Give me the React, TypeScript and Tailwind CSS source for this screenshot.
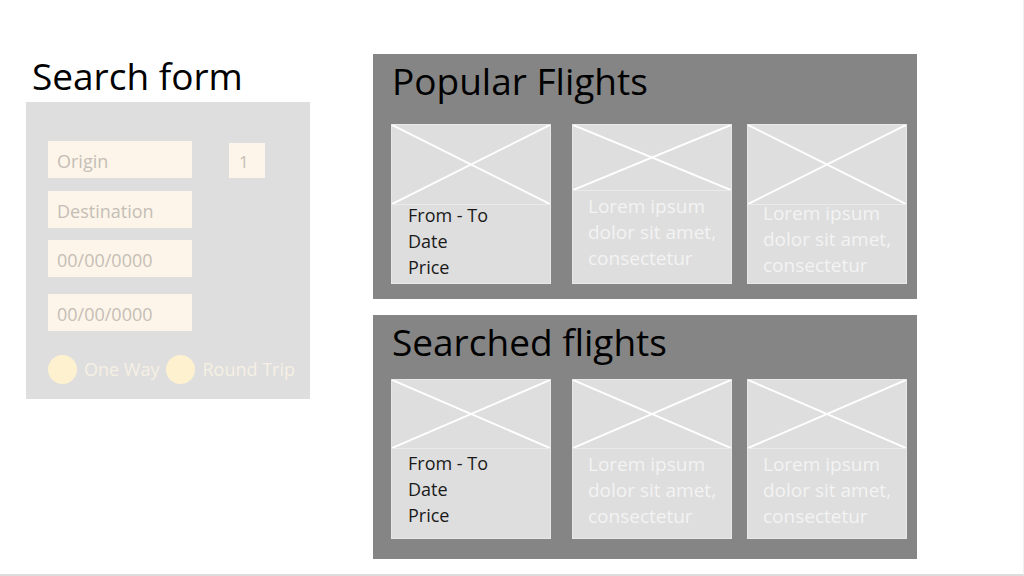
import React from "react";

const font = { fontFamily: '"Open Sans", "Noto Sans", sans-serif' };

function Placeholder({ h }: { h: string }) {
  return (
    <div className={`relative w-full ${h} border-b border-[#eaeaea]`}>
      <svg className="absolute inset-0 h-full w-full" viewBox="0 0 100 100" preserveAspectRatio="none">
        <line x1="0" y1="0" x2="100" y2="100" stroke="#ffffff" strokeWidth="2" vectorEffect="non-scaling-stroke" />
        <line x1="100" y1="0" x2="0" y2="100" stroke="#ffffff" strokeWidth="2" vectorEffect="non-scaling-stroke" />
      </svg>
    </div>
  );
}

function InfoCard({ img, pad }: { img: string; pad: string }) {
  return (
    <div className="flex h-[160px] w-[160px] flex-col overflow-hidden border border-[#e8e8e8] bg-[#dedede]">
      <Placeholder h={img} />
      <div className={`pl-[16px] text-[18px] leading-[26px] text-[#1a1a1a] ${pad}`}>
        <div>From - To</div>
        <div>Date</div>
        <div>Price</div>
      </div>
    </div>
  );
}

function LoremCard({ img, pad }: { img: string; pad: string }) {
  return (
    <div className="flex h-[160px] w-[160px] flex-col overflow-hidden border border-[#e8e8e8] bg-[#dedede]">
      <Placeholder h={img} />
      <div className={`whitespace-nowrap pl-[15px] text-[19px] leading-[26px] text-[#f3f3f3] ${pad}`}>
        <div>Lorem ipsum</div>
        <div>dolor sit amet,</div>
        <div>consectetur</div>
      </div>
    </div>
  );
}

function Field({ label, mt }: { label: string; mt: string }) {
  return (
    <div className={`flex h-[37px] w-[144px] items-center bg-[#fdf5e9] pl-[9px] pt-[3px] text-[18px] text-[#c5beb6] ${mt}`}>
      {label}
    </div>
  );
}

function Radio({ label }: { label: string }) {
  return (
    <div className="flex items-center gap-[7px]">
      <div className="h-[29px] w-[29px] rounded-full bg-[#fdf1cf]" />
      <span className="text-[18px] text-[#f6f0e4]">{label}</span>
    </div>
  );
}

export default function App() {
  return (
    <div style={font} className="flex h-[576px] w-[1024px] border-b-2 border-r border-b-[#dcdcdc] border-r-[#f0f0f0] bg-white">
      {/* search form column */}
      <div className="ml-[26px] flex w-[284px] flex-col pt-[49px]">
        <h1 className="pl-[6px] text-[37px] leading-[53px] text-black">Search form</h1>
        <div className="h-[297px] w-full bg-[#dedede] pl-[22px] pt-[39px]">
          <div className="flex items-start">
            <Field label="Origin" mt="mt-0" />
            <div className="ml-[37px] mt-[2px] flex h-[35px] w-[36px] items-center bg-[#fdf5e9] pl-[10px] pt-[2px] text-[17px] text-[#c5beb6]">
              1
            </div>
          </div>
          <Field label="Destination" mt="mt-[13px]" />
          <Field label="00/00/0000" mt="mt-[12px]" />
          <Field label="00/00/0000" mt="mt-[17px]" />
          <div className="mt-[24px] flex items-center gap-[7px]">
            <Radio label="One Way" />
            <Radio label="Round Trip" />
          </div>
        </div>
      </div>

      {/* flights column */}
      <div className="ml-[63px] flex w-[544px] flex-col gap-[16px] pt-[54px]">
        <section className="h-[245px] bg-[#858585] pl-[18px]">
          <h2 className="pl-[1px] pt-[2px] text-[37px] leading-[50px] text-black">Popular Flights</h2>
          <div className="mt-[18px] flex">
            <InfoCard img="h-[80px]" pad="-mt-[3px]" />
            <div className="ml-[21px]">
              <LoremCard img="h-[66px]" pad="pt-[2px]" />
            </div>
            <div className="ml-[15px]">
              <LoremCard img="h-[80px]" pad="-mt-[5px]" />
            </div>
          </div>
        </section>
        <section className="h-[244px] bg-[#858585] pl-[18px]">
          <h2 className="pl-[1px] pt-[2px] text-[37px] leading-[50px] text-black">Searched flights</h2>
          <div className="mt-[12px] flex">
            <InfoCard img="h-[69px]" pad="pt-[1px]" />
            <div className="ml-[21px]">
              <LoremCard img="h-[69px]" pad="pt-[2px]" />
            </div>
            <div className="ml-[15px]">
              <LoremCard img="h-[69px]" pad="pt-[2px]" />
            </div>
          </div>
        </section>
      </div>
    </div>
  );
}
